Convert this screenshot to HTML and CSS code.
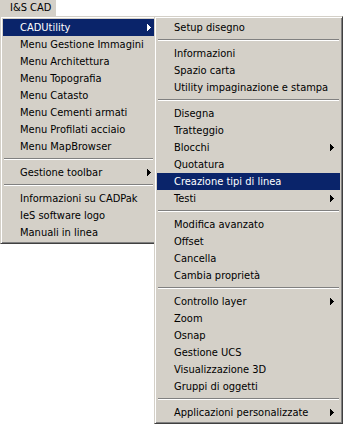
FILE: index.html
```html
<!DOCTYPE html>
<html lang="it">
<head>
<meta charset="utf-8">
<title>I&amp;S CAD</title>
<link rel="stylesheet" href="styles.css">
</head>
<body>
<div class="screen">
  <div class="menubar"><span class="bar-item">I&amp;S CAD</span></div>
  <div class="menus">
    <ul class="menu menu-main">
      <li class="item sub active"><span class="label">CADUtility</span><svg class="arrow" width="4" height="7" viewBox="0 0 4 7"><polygon points="0,0 4,3.5 0,7"/></svg></li>
      <li class="item"><span class="label">Menu Gestione Immagini</span></li>
      <li class="item"><span class="label">Menu Architettura</span></li>
      <li class="item"><span class="label">Menu Topografia</span></li>
      <li class="item"><span class="label">Menu Catasto</span></li>
      <li class="item"><span class="label">Menu Cementi armati</span></li>
      <li class="item"><span class="label">Menu Profilati acciaio</span></li>
      <li class="item"><span class="label">Menu MapBrowser</span></li>
      <li class="sep"></li>
      <li class="item sub"><span class="label">Gestione toolbar</span><svg class="arrow" width="4" height="7" viewBox="0 0 4 7"><polygon points="0,0 4,3.5 0,7"/></svg></li>
      <li class="sep"></li>
      <li class="item"><span class="label">Informazioni su CADPak</span></li>
      <li class="item"><span class="label">IeS software logo</span></li>
      <li class="item"><span class="label">Manuali in linea</span></li>
    </ul>
    <ul class="menu menu-sub">
      <li class="item"><span class="label">Setup disegno</span></li>
      <li class="sep"></li>
      <li class="item"><span class="label">Informazioni</span></li>
      <li class="item"><span class="label">Spazio carta</span></li>
      <li class="item"><span class="label">Utility impaginazione e stampa</span></li>
      <li class="sep"></li>
      <li class="item"><span class="label">Disegna</span></li>
      <li class="item"><span class="label">Tratteggio</span></li>
      <li class="item sub"><span class="label">Blocchi</span><svg class="arrow" width="4" height="7" viewBox="0 0 4 7"><polygon points="0,0 4,3.5 0,7"/></svg></li>
      <li class="item"><span class="label">Quotatura</span></li>
      <li class="item active"><span class="label">Creazione tipi di linea</span></li>
      <li class="item sub"><span class="label">Testi</span><svg class="arrow" width="4" height="7" viewBox="0 0 4 7"><polygon points="0,0 4,3.5 0,7"/></svg></li>
      <li class="sep"></li>
      <li class="item"><span class="label">Modifica avanzato</span></li>
      <li class="item"><span class="label">Offset</span></li>
      <li class="item"><span class="label">Cancella</span></li>
      <li class="item"><span class="label">Cambia proprietà</span></li>
      <li class="sep"></li>
      <li class="item sub"><span class="label">Controllo layer</span><svg class="arrow" width="4" height="7" viewBox="0 0 4 7"><polygon points="0,0 4,3.5 0,7"/></svg></li>
      <li class="item"><span class="label">Zoom</span></li>
      <li class="item"><span class="label">Osnap</span></li>
      <li class="item"><span class="label">Gestione UCS</span></li>
      <li class="item"><span class="label">Visualizzazione 3D</span></li>
      <li class="item"><span class="label">Gruppi di oggetti</span></li>
      <li class="sep"></li>
      <li class="item sub"><span class="label">Applicazioni personalizzate</span><svg class="arrow" width="4" height="7" viewBox="0 0 4 7"><polygon points="0,0 4,3.5 0,7"/></svg></li>
    </ul>
  </div>
</div>
</body>
</html>
```

FILE: styles.css
```css
html, body {
  margin: 0;
  padding: 0;
  background: #ffffff;
}

.screen {
  width: 343px;
  height: 425px;
  overflow: hidden;
  font-family: "DejaVu Sans Condensed", "Liberation Sans", Arial, sans-serif;
  font-size: 11px;
  color: #000000;
  display: flex;
  flex-direction: column;
}

.menubar {
  height: 16px;
  display: flex;
}

.bar-item {
  width: 56px;
  box-sizing: border-box;
  padding-left: 10px;
  background: #d4d0c8;
  line-height: 16px;
}

.menus {
  display: flex;
  align-items: flex-start;
}

.menu {
  list-style: none;
  margin: 0;
  box-sizing: border-box;
  background: #d4d0c8;
  border: 1px solid;
  border-color: #d4d0c8 #404040 #404040 #d4d0c8;
  box-shadow: inset 1px 1px 0 #ffffff, inset -1px -1px 0 #808080;
  padding: 2px;
}

.menu-main {
  width: 157px;
}

.menu-sub {
  width: 189px;
  margin-left: -3px;
  position: relative;
}

.item {
  height: 17px;
  line-height: 17px;
  display: flex;
  align-items: center;
  padding-left: 17px;
  white-space: nowrap;
}

.label {
  flex: 1;
}

.menu-main .item {
  padding-right: 3px;
}

.menu-sub .item {
  padding-right: 6px;
}

.arrow {
  display: block;
  fill: #000000;
  shape-rendering: crispEdges;
}

.item.active {
  background: #0a246a;
  color: #ffffff;
}

.item.active .arrow {
  fill: #ffffff;
}

.sep {
  height: 9px;
  box-sizing: border-box;
  padding-top: 3px;
  margin: 0 1px;
}

.sep::before {
  content: "";
  display: block;
  height: 1px;
  background: #808080;
  border-bottom: 1px solid #ffffff;
}
```
